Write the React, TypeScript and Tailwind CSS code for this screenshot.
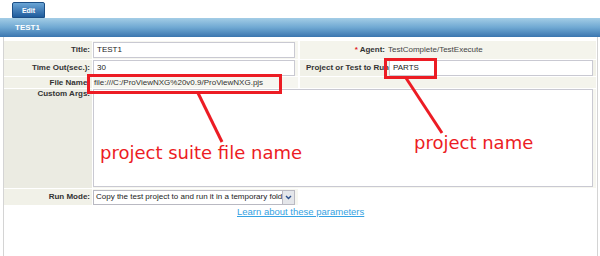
import type { FC, ReactNode } from 'react';

const labelCls =
  'shrink-0 bg-[#f1f1e8] text-right pr-[2px] font-bold text-[#333] whitespace-nowrap overflow-hidden';

const Field: FC<{ children?: ReactNode; w?: string }> = ({ children, w = 'w-[202px]' }) => (
  <div
    className={`${w} h-[16px] bg-white border border-[#c9c9d2] flex items-center px-[3px] text-[#222] whitespace-nowrap overflow-hidden`}
  >
    {children}
  </div>
);

const App: FC = () => {
  return (
    <div
      className="relative w-[600px] h-[256px] overflow-hidden bg-white text-[8px] leading-none"
      style={{ fontFamily: '"Liberation Sans", Arial, sans-serif' }}
    >
      {/* tab */}
      <div className="h-[18px] pl-[12px] pt-[2px] flex">
        <div className="w-[33px] h-[16px] rounded-t-[2px] border border-[#1c4f86] bg-gradient-to-b from-[#6aa5d6] to-[#1f5c9c] flex items-center justify-center text-white font-bold text-[7px]">
          Edit
        </div>
      </div>

      {/* header bar */}
      <div className="h-[19px] bg-gradient-to-b from-[#a3cde6] via-[#6fa8d2] to-[#3b76af] flex items-center pl-[15px] text-white font-bold text-[8px]">
        TEST1
      </div>

      {/* body */}
      <div className="ml-[3px] w-[595px] h-[219px] border-l border-r border-[#d4d4d4] pt-[4px] pr-[1px]">
        <div className="flex flex-col gap-[1px]">
          {/* Title / Agent */}
          <div className="flex h-[18px]">
            <div className={`${labelCls} w-[88px] flex items-center justify-end`}>Title:</div>
            <div className="w-[205px] bg-[#f6f6f0] ml-[1px] flex items-center">
              <Field>TEST1</Field>
            </div>
            <div className="flex-1 ml-[2px] bg-[#f4f4ec] flex items-center">
              <div className="w-[88px] text-right pr-[3px] font-bold text-[#333]">
                <span className="text-[#e01b1b]">* </span>Agent:
              </div>
              <span className="text-[#444]">TestComplete/TestExecute</span>
            </div>
          </div>

          {/* Time out / project */}
          <div className="flex h-[16px]">
            <div className={`${labelCls} w-[88px] flex items-center justify-end`}>Time Out(sec.):</div>
            <div className="w-[205px] bg-[#f6f6f0] ml-[1px] flex items-center">
              <Field>30</Field>
            </div>
            <div className="flex-1 ml-[2px] bg-[#f1f1e8] flex items-center">
              <div className="w-[89px] pl-[6px] font-bold text-[#333] whitespace-nowrap overflow-hidden">
                Project or Test to Run
              </div>
              <Field w="w-[204px]">PARTS</Field>
            </div>
          </div>

          {/* File name */}
          <div className="flex h-[11px]">
            <div className={`${labelCls} w-[88px] flex items-center justify-end`}>File Name:</div>
            <div className="w-[205px] bg-[#f6f6f0] ml-[1px] flex items-center pl-[1px] text-[#333] whitespace-nowrap">
              file:///C:/ProViewNXG%20v0.9/ProViewNXG.pjs
            </div>
            <div className="flex-1 ml-[2px] bg-[#f4f4ec]" />
          </div>

          {/* Custom args */}
          <div className="flex h-[99px]">
            <div className="shrink-0 w-[88px] bg-[#ebebe2] text-right pr-[2px] pt-[1px] font-bold text-[#333]">
              Custom Args:
            </div>
            <div className="flex-1 ml-[1px] bg-[#f6f6f0] pr-[3px]">
              <div className="h-[98px] bg-white border border-[#c9c9d2]" />
            </div>
          </div>

          {/* Run mode */}
          <div className="flex h-[16px]">
            <div className={`${labelCls} w-[88px] flex items-center justify-end`}>Run Mode:</div>
            <div className="w-[205px] bg-[#f6f6f0] ml-[1px] flex items-center">
              <div className="w-[202px] h-[15px] bg-white border border-[#b9b9c2] flex items-center">
                <div className="flex-1 px-[2px] whitespace-nowrap overflow-hidden text-[#222]">
                  Copy the test project to and run it in a temporary folder
                </div>
                <div className="w-[12px] h-full bg-[#e4e6ea] border-l border-[#b9b9c2] flex items-center justify-center">
                  <svg width="7" height="5" viewBox="0 0 7 5">
                    <path d="M1 1l2.5 2.5L6 1" stroke="#2b4f8a" strokeWidth="1.4" fill="none" />
                  </svg>
                </div>
              </div>
            </div>
          </div>

          <div className="pl-[233px] pt-[1px]">
            <span className="text-[9.5px] text-[#35a2e2] underline">Learn about these parameters</span>
          </div>
        </div>
      </div>

      {/* annotations */}
      <div className="absolute left-[87px] top-[74px] w-[195px] h-[20px] border-[3px] border-[#ec1c24]" />
      <div className="absolute left-[384px] top-[58px] w-[53px] h-[21px] border-[3px] border-[#ec1c24]" />
      <svg className="absolute left-0 top-0" width="600" height="256">
        <line x1="198" y1="93" x2="222" y2="142" stroke="#ec1c24" strokeWidth="3" />
        <line x1="406" y1="78" x2="442" y2="133" stroke="#ec1c24" strokeWidth="3" />
      </svg>
      <div
        className="absolute left-[100px] top-[144px] text-[18px] leading-none text-[#ec1c24]"
        style={{ fontFamily: '"DejaVu Sans", Verdana, sans-serif' }}
      >
        project suite file name
      </div>
      <div
        className="absolute left-[414px] top-[134px] text-[18px] leading-none text-[#ec1c24]"
        style={{ fontFamily: '"DejaVu Sans", Verdana, sans-serif' }}
      >
        project name
      </div>
    </div>
  );
};

export default App;
